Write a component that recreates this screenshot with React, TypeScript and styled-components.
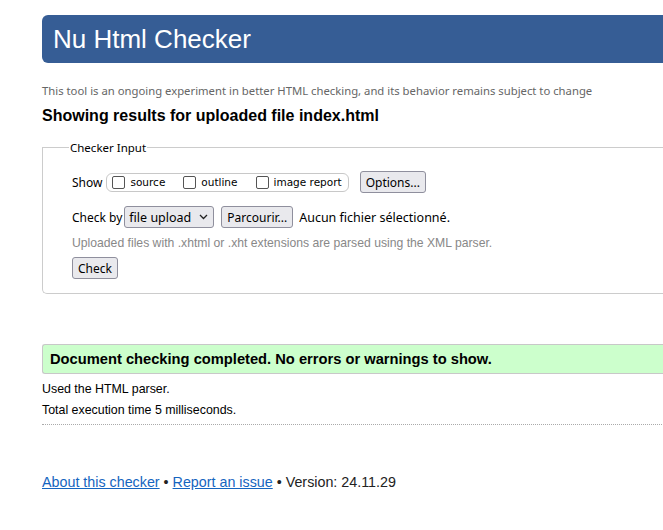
import React, { FC } from 'react';
import styled, { createGlobalStyle } from 'styled-components';

const GlobalStyle = createGlobalStyle`
    html, body {
        margin: 0;
        padding: 0;
        background: #fff;
        overflow: hidden;
    }
    body {
        font-family: "Liberation Sans", Arial, sans-serif;
        color: #000;
    }
`;

const segoe = `"Noto Sans", "Open Sans", sans-serif`;

const Page = styled.div`
    width: 680px;
    padding: 15px 0 0 42px;
`;

const Header = styled.h1`
    margin: 0;
    height: 48px;
    background-color: #365d95;
    border-radius: 6px 0 0 6px;
    color: #fff;
    font-size: 26px;
    font-weight: normal;
    line-height: 48px;
    padding-left: 11px;
`;

const Intro = styled.p`
    margin: 20px 0 0;
    font-family: ${segoe};
    font-size: 11.3px;
    color: #666;
`;

const Heading = styled.h2`
    margin: 9px 0 0;
    font-size: 16px;
    font-weight: bold;
`;

const Fieldset = styled.fieldset`
    margin: 15px 0 0;
    border: 1px solid #ccc;
    border-radius: 0 0 0 5px;
    border-right: none;
    padding: 4px 0 14px 29px;
`;

const Legend = styled.legend`
    font-family: ${segoe};
    font-size: 11.5px;
    padding: 0 1px;
    margin-left: -3px;
`;

const Row = styled.div`
    display: flex;
    align-items: center;
    font-family: ${segoe};
    font-size: 12px;
    margin-top: ${({ $gap }: { $gap: number }) => $gap}px;
`;

const Pill = styled.div`
    display: flex;
    align-items: center;
    height: 17px;
    border: 1px solid #c8c8c8;
    border-radius: 6px;
    margin-left: 4px;
    padding: 0 6px 0 5px;
    gap: 18px;
`;

const CheckLabel = styled.label`
    display: flex;
    align-items: center;
    font-family: "DejaVu Sans", Verdana, sans-serif;
    font-size: 10.5px;
`;

const Box = styled.span`
    width: 11px;
    height: 11px;
    border: 1px solid #555;
    border-radius: 2px;
    margin-right: 5px;
    background: #fff;
`;

const Button = styled.button`
    font-family: ${segoe};
    font-size: 12px;
    height: 22px;
    padding: 0 5px;
    border: 1px solid #8f8f9d;
    border-radius: 3px;
    background: #e9e9ed;
    color: #000;
    margin-left: ${({ $ml }: { $ml?: number }) => $ml ?? 0}px;
`;

const Select = styled.div`
    display: flex;
    align-items: center;
    height: 20px;
    margin-left: 2px;
    padding: 0 5px 0 4px;
    border: 1px solid #8f8f9d;
    border-radius: 3px;
    background: #e9e9ed;
    font-family: ${segoe};
    font-size: 12.5px;
    gap: 8px;
`;

const FileName = styled.span`
    margin-left: 6px;
    font-family: ${segoe};
    font-size: 12.5px;
`;

const Hint = styled.p`
    margin: 8px 0 0;
    font-size: 12.2px;
    color: #888;
`;

const Success = styled.div`
    margin-top: 50px;
    height: 28px;
    line-height: 28px;
    background: #ccffcc;
    border: 1px solid #c8c8c8;
    border-right: none;
    border-radius: 3px 0 0 3px;
    padding-left: 7px;
    font-size: 14.7px;
    font-weight: bold;
`;

const Detail = styled.p`
    margin: ${({ $mt }: { $mt: number }) => $mt}px 0 0;
    font-size: 12.4px;
    line-height: 14px;
`;

const Rule = styled.hr`
    margin: 7px 0 0;
    border: none;
    border-top: 1px dotted #aaa;
    height: 0;
`;

const Footer = styled.p`
    margin: 49px 0 0;
    font-size: 14.3px;
    color: #222;
`;

const Link = styled.a`
    color: #1565c0;
    text-decoration: underline;
`;

const Chevron: FC = () => (
    <svg width="9" height="6" viewBox="0 0 9 6">
        <path d="M1 1l3.5 3.5L8 1" fill="none" stroke="#222" strokeWidth="1.3" />
    </svg>
);

const App: FC = () => (
    <Page>
        <GlobalStyle />
        <Header>Nu Html Checker</Header>
        <Intro>This tool is an ongoing experiment in better HTML checking, and its behavior remains subject to change</Intro>
        <Heading>Showing results for uploaded file index.html</Heading>
        <Fieldset>
            <Legend>Checker Input</Legend>
            <Row $gap={12}>
                Show
                <Pill>
                    <CheckLabel><Box />source</CheckLabel>
                    <CheckLabel><Box />outline</CheckLabel>
                    <CheckLabel><Box />image report</CheckLabel>
                </Pill>
                <Button $ml={11}>Options...</Button>
            </Row>
            <Row $gap={13}>
                Check by
                <Select>
                    file upload
                    <Chevron />
                </Select>
                <Button $ml={7}>Parcourir...</Button>
                <FileName>Aucun fichier sélectionné.</FileName>
            </Row>
            <Hint>Uploaded files with .xhtml or .xht extensions are parsed using the XML parser.</Hint>
            <Row $gap={7}>
                <Button>Check</Button>
            </Row>
        </Fieldset>
        <Success>Document checking completed. No errors or warnings to show.</Success>
        <Detail $mt={8}>Used the HTML parser.</Detail>
        <Detail $mt={7}>Total execution time 5 milliseconds.</Detail>
        <Rule />
        <Footer>
            <Link href="#">About this checker</Link> • <Link href="#">Report an issue</Link> • Version: 24.11.29
        </Footer>
    </Page>
);

export default App;
